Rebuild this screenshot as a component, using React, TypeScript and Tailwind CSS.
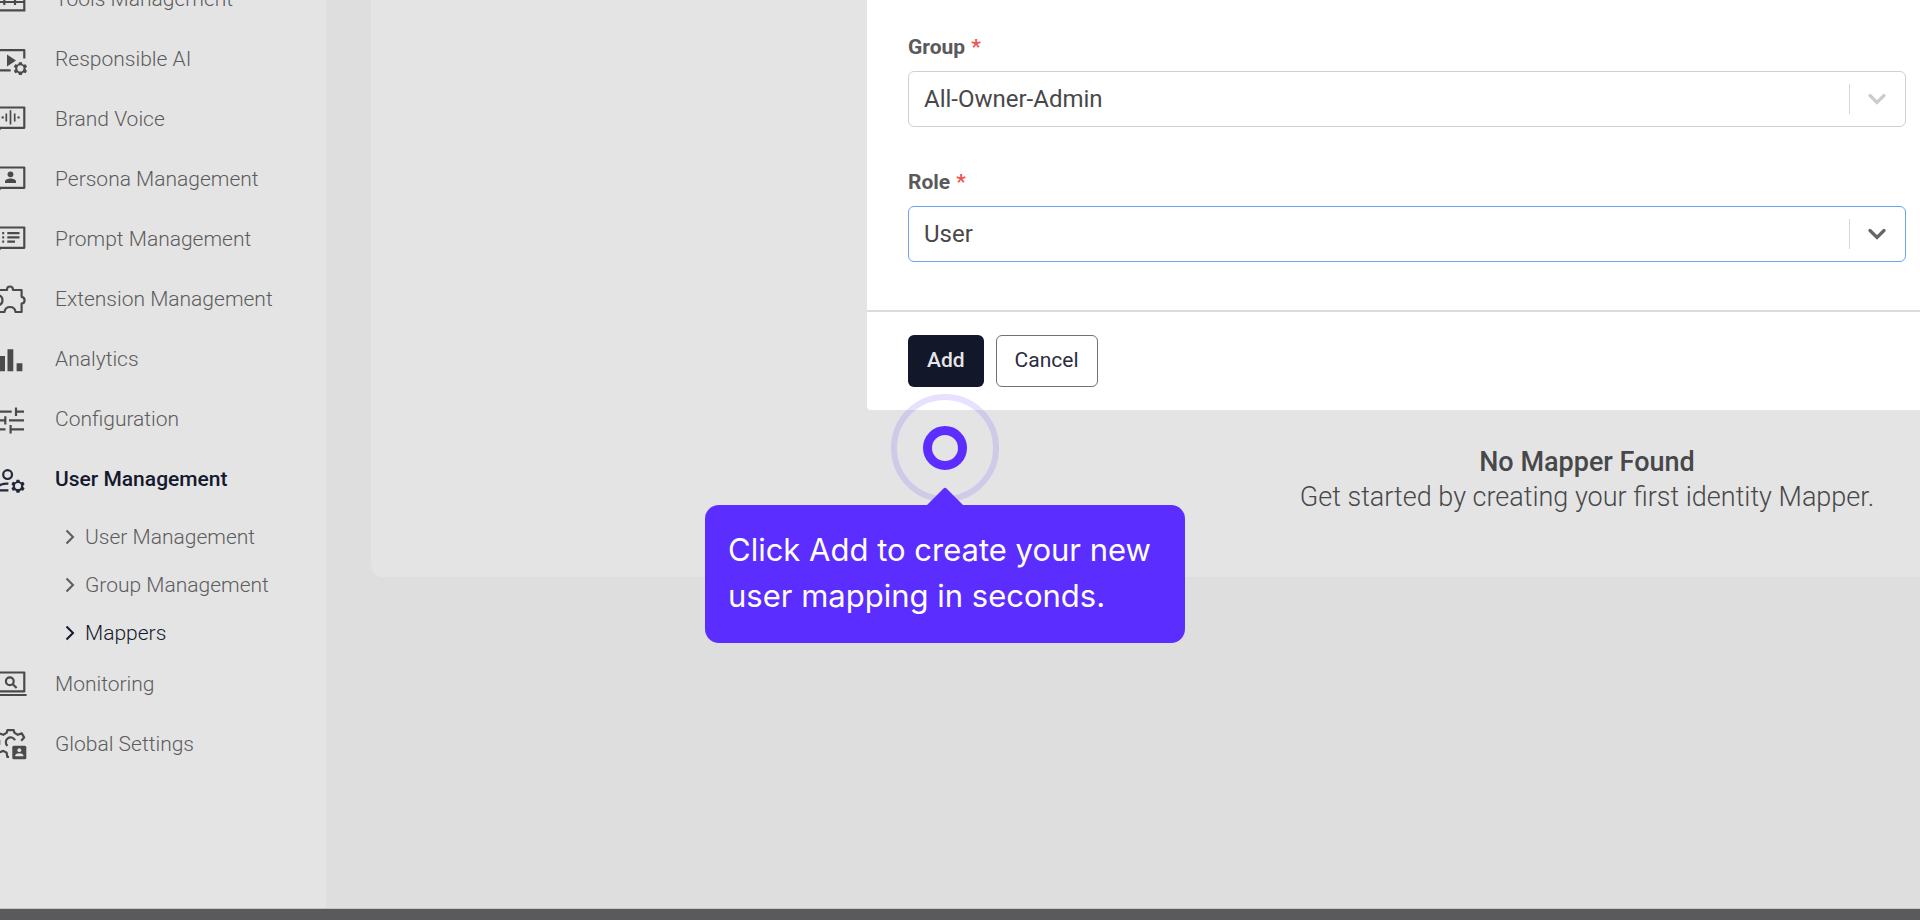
import { useState } from "react";
import type { ReactNode } from "react";
import clsx from "clsx";

type NavItem = {
  label: string;
  icon: ReactNode;
  active?: boolean;
  children?: { label: string; active?: boolean }[];
};

const GEAR =
  "M-1.3-5.6h2.6l.5 1.7 1.1.6 1.8-.5 1.3 2.2-1.3 1.3v1.2l1.3 1.2-1.3 2.2-1.8-.5-1.1.7-.5 1.6h-2.6l-.5-1.6-1.1-.7-1.8.5-1.3-2.2 1.3-1.2v-1.2l-1.3-1.3 1.3-2.2 1.8.5 1.1-.6z";

function SmallGear({ x, y }: { x: number; y: number }) {
  return (
    <g transform={`translate(${x} ${y}) scale(1.1)`}>
      <path d={GEAR} fill="currentColor" stroke="none" />
      <circle r="2.8" className="fill-[#e4e4e4]" stroke="none" />
    </g>
  );
}

const bubble = <path strokeLinejoin="round" d="M4 32V6.5h28.3v20.3H8.6z" />;

const icons = {
  tools: (
    <>
      <path d="M4 13h28.3v16.3H4zM4 21h28.3M12.3 17.5V24M23 17.5V24M12 13V8h12v5" />
    </>
  ),
  responsible: (
    <>
      <path strokeLinejoin="round" d="M32.3 17.5V9.2H4v20.1h14.7" />
      <path d="M15 13.5l9 6-9 6z" fill="currentColor" stroke="none" />
      <SmallGear x={28.4} y={27.4} />
    </>
  ),
  voice: (
    <>
      {bubble}
      <path d="M14.3 12.6v7.8M18.5 9.2v14.4M22.7 12.6v7.8" strokeWidth="1.7" />
      <circle cx="10.7" cy="16.4" r="1.2" fill="currentColor" stroke="none" />
      <circle cx="26.6" cy="16.4" r="1.2" fill="currentColor" stroke="none" />
    </>
  ),
  persona: (
    <>
      {bubble}
      <g fill="currentColor" stroke="none">
        <circle cx="18.5" cy="13.3" r="2.9" />
        <path d="M13 22v-1.4c0-1.9 3-3 5.5-3s5.5 1.1 5.5 3V22z" />
      </g>
    </>
  ),
  prompt: (
    <>
      {bubble}
      <path d="M15.3 12.2h12.2M15.3 16.4h12.2M15.3 20.6H23" />
      <path d="M10.2 12.2h2M10.2 16.4h2M10.2 20.6h2" />
    </>
  ),
  extension: (
    <path
      strokeLinejoin="round"
      d="M5.5 9H15c0-2.600 1-3.500 3-3.500s3 .9 3 3.500h8.600v6.800c2 .3 3 1.500 3 3.400s-1 3.200-3 3.500V31h-6c-.6-3.400-2.500-5-5.600-5s-5 1.600-5.600 5H5.500v-6.600c3.200-.4 5-2.100 5-5.200s-1.800-4.800-5-5.200z"
    />
  ),
  analytics: (
    <g fill="currentColor" stroke="none">
      <path d="M7.200 15h5.800v15.300H7.200zM15.500 8.300h5.800v22h-5.800zM24.600 22.300h5.800v8h-5.800z" />
    </g>
  ),
  configuration: (
    <path d="M4 10.700h15.700M24 10.700h8M24 6.500v8.400M4 19.300h9.300M13.300 15.200v8.300M17 19.300h15M4 28.300h9.500M18.600 24v8.500M18.600 28.300H32" />
  ),
  user: (
    <>
      <circle cx="15.600" cy="13.600" r="4.400" />
      <path d="M16.400 22.600c-5-.4-10.400 1.400-10.400 4.200v2.500h10.400" />
      <SmallGear x={26} y={25} />
    </>
  ),
  monitoring: (
    <>
      <path strokeLinejoin="round" d="M4.500 6.500h27.800v18.800H4.500zM2 29h32.600" />
      <circle cx="17.800" cy="15.200" r="3.900" />
      <path d="M20.600 18l4 4" />
    </>
  ),
  settings: (
    <>
      <path
        strokeLinejoin="round"
        d="M17 31h-1.600l-.8-4.200-3.300-1.900-4 1.400L4 20.900l3.200-2.700v-3.600L4 11.800l3.300-4.400 4 1.400 3.300-1.900.8-2.800h6.300l.8 2.800 3.300 1.900 4-1.400 2.300 4-2.900 3.300"
      />
      <path d="M23 14.200a4.800 4.800 0 1 0-7.500 5.600" />
      <rect x="20.300" y="19.700" width="14" height="13.500" rx="1.500" fill="currentColor" stroke="none" />
      <g className="fill-[#e4e4e4]" stroke="none">
        <circle cx="27.300" cy="24.200" r="1.900" />
        <path d="M23.300 30.200v-1c0-1.300 2.200-2 4-2s4 .7 4 2v1z" />
      </g>
    </>
  ),
};

const navItems: NavItem[] = [
  { label: "Tools Management", icon: icons.tools },
  { label: "Responsible AI", icon: icons.responsible },
  { label: "Brand Voice", icon: icons.voice },
  { label: "Persona Management", icon: icons.persona },
  { label: "Prompt Management", icon: icons.prompt },
  { label: "Extension Management", icon: icons.extension },
  { label: "Analytics", icon: icons.analytics },
  { label: "Configuration", icon: icons.configuration },
  {
    label: "User Management",
    icon: icons.user,
    active: true,
    children: [
      { label: "User Management" },
      { label: "Group Management" },
      { label: "Mappers", active: true },
    ],
  },
  { label: "Monitoring", icon: icons.monitoring },
  { label: "Global Settings", icon: icons.settings },
];

function Sidebar() {
  return (
    <nav className="w-[326px] shrink-0 overflow-hidden bg-[#e4e4e4]">
      <ul className="-mt-[31px] -ml-2 text-[21px] font-light text-[#5c5c5e]">
        {navItems.map((item) => (
          <li key={item.label}>
            <a
              href="#"
              className={clsx("flex h-[60px] items-center gap-[27px]", item.active && "font-medium text-[#14192d]")}
            >
              <svg
                viewBox="0 0 36 36"
                fill="none"
                stroke="currentColor"
                strokeWidth="2.2"
                className={clsx("size-9 shrink-0", item.active ? "text-[#23273a]" : "text-[#4a4a4c]")}
              >
                {item.icon}
              </svg>
              <span className="pt-0.5">{item.label}</span>
            </a>
            {item.children && (
              <ul className="flex flex-col gap-5 pt-3.5 pb-[7px] pl-[73px]">
                {item.children.map((child) => (
                  <li key={child.label}>
                    <a
                      href="#"
                      className={clsx("flex items-center gap-2.5 leading-7", child.active && "text-[#14192d]")}
                    >
                      <svg viewBox="0 0 10 16" fill="none" stroke="currentColor" strokeWidth="2" className="h-4 w-2.5">
                        <path d="M1.500 1.500l6.500 6.500-6.500 6.500" />
                      </svg>
                      {child.label}
                    </a>
                  </li>
                ))}
              </ul>
            )}
          </li>
        ))}
      </ul>
    </nav>
  );
}

type FieldProps = {
  id: string;
  label: string;
  value: string;
  options: string[];
  focused?: boolean;
  onChange: (value: string) => void;
};

function SelectField({ id, label, value, options, focused, onChange }: FieldProps) {
  return (
    <div className="flex flex-col gap-2.5">
      <label htmlFor={id} className="flex gap-1.5 text-[21px] leading-7 font-bold text-[#5a5a5c]">
        {label} <span className="text-[#ef5350]">*</span>
      </label>
      <div className="relative">
        <select
          id={id}
          value={value}
          onChange={(e) => onChange(e.target.value)}
          className={clsx(
            "h-14 w-full appearance-none rounded-md border bg-white pr-16 pl-[15px] text-[24px] text-[#48484a] outline-none",
            focused ? "border-[#6ba3ee]" : "border-[#d0d0d0]"
          )}
        >
          {options.map((o) => (
            <option key={o}>{o}</option>
          ))}
        </select>
        <div className="pointer-events-none absolute inset-y-0 right-0 flex items-center gap-[18px] pr-5">
          <span className="h-[30px] w-px bg-[#d6d6d6]" />
          <svg
            viewBox="0 0 18 12"
            fill="none"
            stroke="currentColor"
            strokeWidth="3.200"
            strokeLinecap="round"
            className={clsx("h-3 w-[18px]", focused ? "text-[#666]" : "text-[#ccc]")}
          >
            <path d="M2 2.500l7 7 7-7" />
          </svg>
        </div>
      </div>
    </div>
  );
}

function MapperDialog() {
  const [group, setGroup] = useState("All-Owner-Admin");
  const [role, setRole] = useState("User");

  return (
    <form
      onSubmit={(e) => e.preventDefault()}
      className="absolute top-0 right-0 left-[867px] rounded-bl bg-white"
    >
      <div className="flex flex-col gap-[41px] pt-[33px] pr-3.5 pb-12 pl-[41px]">
        <SelectField
          id="group"
          label="Group"
          value={group}
          options={["All-Owner-Admin"]}
          onChange={setGroup}
        />
        <SelectField id="role" label="Role" value={role} options={["User", "Admin"]} focused onChange={setRole} />
      </div>
      <div className="flex gap-3 border-t-2 border-[#dcdcdc] py-[23px] pl-[41px] text-[21px]">
        <button type="submit" className="h-[52px] rounded-md bg-[#13172a] px-[19px] font-medium text-[#e6e6e8]">
          Add
        </button>
        <button type="button" className="h-[52px] rounded-md border border-[#6f717c] bg-white px-[18px] text-[#2a2d3c]">
          Cancel
        </button>
      </div>
    </form>
  );
}

function Hint() {
  return (
    <div className="absolute top-[394px] left-[705px] flex w-[480px] flex-col items-center">
      {/* Pulse */}
      <div className="flex size-[108px] items-center justify-center rounded-full border-[6px] border-[#5b2eff]/15">
        <div className="size-11 rounded-full border-[9px] border-[#5b2eff]" />
      </div>
      {/* Bubble */}
      <div className="relative mt-[3px] w-full rounded-[14px] bg-[#5b2eff] px-[23px] pt-[22px] pb-6 font-['Inter',sans-serif] text-[31px] leading-[46px] text-white">
        <svg viewBox="0 0 36 18" className="absolute bottom-full left-1/2 h-[18px] w-9 -translate-x-1/2 fill-[#5b2eff]">
          <path d="M0 18L16.500 1.500q1.500-1.500 3 0L36 18z" />
        </svg>
        Click Add to create your new user mapping in seconds.
      </div>
    </div>
  );
}

export default function App() {
  return (
    <div className="relative flex min-h-screen flex-col overflow-hidden bg-[#dedede] font-['Roboto',sans-serif]">
      <div className="flex flex-1">
        <Sidebar />
        <main className="flex-1 pl-[45px]">
          <section className="flex flex-col items-center rounded-bl-xl bg-[#e4e4e4] pt-[445px] pb-[62px] pl-[883px] text-[27px] leading-[35px] text-[#48484a]">
            <h2 className="font-medium whitespace-nowrap">No Mapper Found</h2>
            <p className="font-light whitespace-nowrap">Get started by creating your first identity Mapper.</p>
          </section>
        </main>
      </div>
      <footer className="h-3 border-t border-[#c6c6c8] bg-[#5a5a5c]" />
      <MapperDialog />
      <Hint />
    </div>
  );
}
